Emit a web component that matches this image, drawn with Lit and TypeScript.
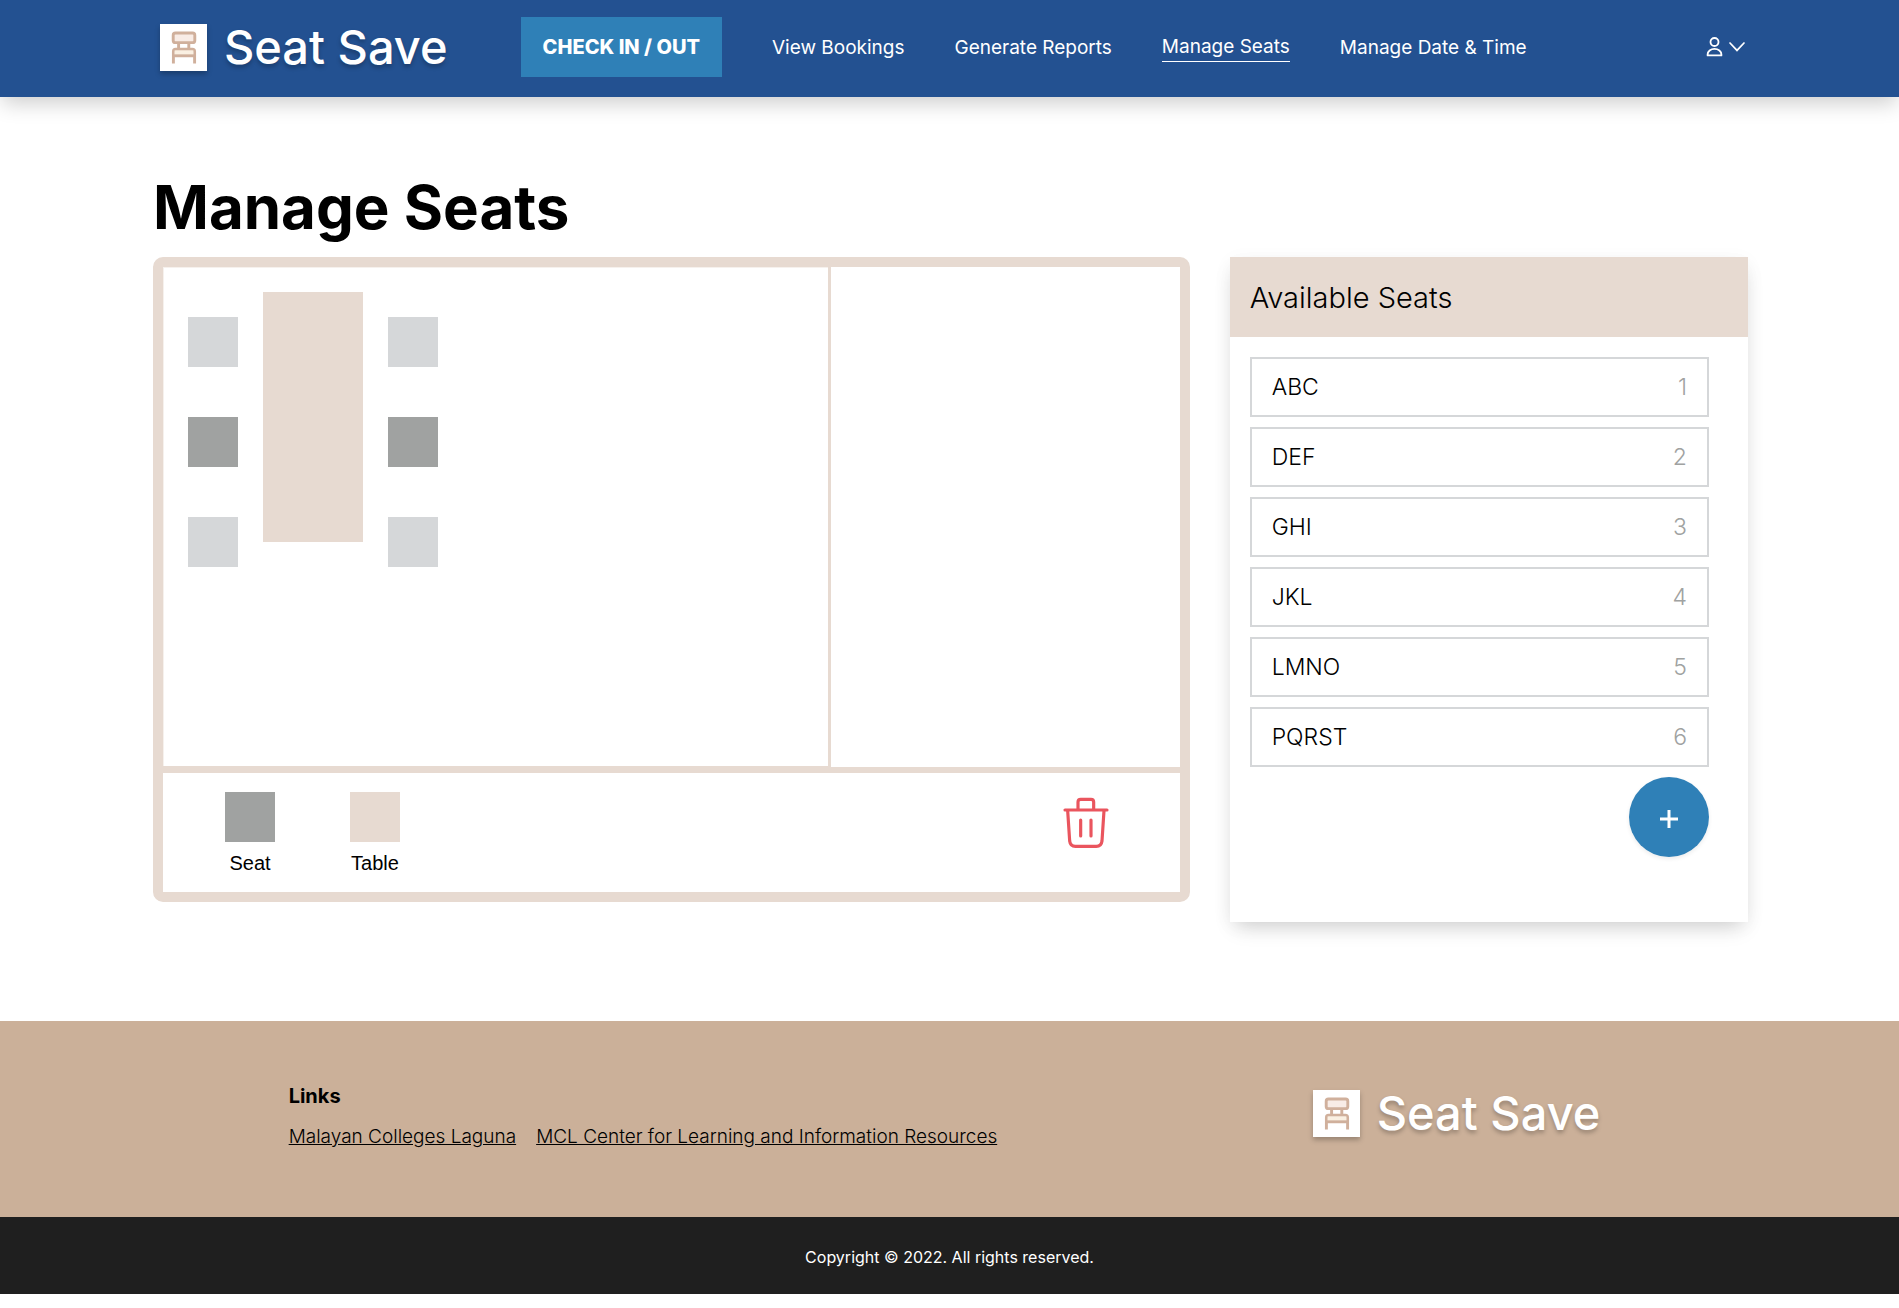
import { LitElement, html, css, svg } from "lit";
import { customElement, property, state } from "lit/decorators.js";
import { classMap } from "lit/directives/class-map.js";

const CELL = 25;

type Kind = "open" | "taken" | "table";

interface Piece {
  kind: Kind;
  col: number;
  row: number;
  cols: number;
  rows: number;
}

const PIECES: Piece[] = [
  { kind: "open", col: 1, row: 2, cols: 2, rows: 2 },
  { kind: "taken", col: 1, row: 6, cols: 2, rows: 2 },
  { kind: "open", col: 1, row: 10, cols: 2, rows: 2 },
  { kind: "table", col: 4, row: 1, cols: 4, rows: 10 },
  { kind: "open", col: 9, row: 2, cols: 2, rows: 2 },
  { kind: "taken", col: 9, row: 6, cols: 2, rows: 2 },
  { kind: "open", col: 9, row: 10, cols: 2, rows: 2 },
];

const SEATS = ["ABC", "DEF", "GHI", "JKL", "LMNO", "PQRST"];

const NAV = ["View Bookings", "Generate Reports", "Manage Seats", "Manage Date & Time"];

@customElement("seat-logo")
export class SeatLogo extends LitElement {
  static styles = css`
    :host {
      display: flex;
      align-items: center;
      gap: 17px;
      color: #fff;
      font: 500 47px/60px Inter, "Open Sans", sans-serif;
      white-space: nowrap;
      text-shadow: 0 3px 4px rgba(0, 0, 0, 0.25);
    }
    .mark {
      flex: none;
      width: 47px;
      height: 47px;
      background: #fff;
      box-shadow: 0 3px 5px rgba(0, 0, 0, 0.25);
    }
  `;

  render() {
    return html`
      <svg class="mark" viewBox="0 0 47 47" aria-hidden="true">
        ${svg`<g stroke="#d0b09c" stroke-width="2.9" stroke-linejoin="round">
          <path d="M18.6 19v6M28.8 19v6" fill="none"></path>
          <rect x="13.2" y="9" width="21.6" height="9.6" rx="2.2" fill="#f8ece6"></rect>
          <path d="M13.4 39.4V27.4q0-2.2 2.2-2.2h16.8q2.2 0 2.2 2.2v12" fill="none"></path>
          <rect x="14.6" y="26.4" width="18.8" height="4.6" fill="#faf0e2" stroke="none"></rect>
          <path d="M13.4 31.8h21.2" fill="none"></path>
        </g>`}
      </svg>
      <span>Seat Save</span>
    `;
  }
}

@customElement("site-header")
export class SiteHeader extends LitElement {
  @property() current = "Manage Seats";

  static styles = css`
    :host {
      display: flex;
      align-items: center;
      box-sizing: border-box;
      min-height: 97px;
      padding: 0 8% 3px;
      background: #235191;
      box-shadow: 0 8px 20px -2px rgba(0, 0, 0, 0.2);
      position: relative;
      font: 400 19px/28px Inter, "Open Sans", sans-serif;
    }
    .home {
      margin: 0 73px 0 8px;
      text-decoration: none;
    }
    .nav {
      display: flex;
      align-items: center;
      gap: 50px;
    }
    .check {
      height: 60px;
      padding: 0 22px;
      border: 0;
      background: #2f80b7;
      color: #fff;
      font: 800 20px/28px Inter, "Open Sans", sans-serif;
      white-space: nowrap;
    }
    .link {
      padding-top: 1px;
      color: #fff;
      text-decoration: none;
      white-space: nowrap;
    }
    .current {
      padding-top: 0;
      border-bottom: 1px solid #fff;
    }
    .user {
      display: flex;
      align-items: center;
      gap: 6px;
      margin-left: auto;
      padding: 0 2px;
      border: 0;
      background: none;
    }
  `;

  render() {
    return html`
      <a class="home" href="#"><seat-logo></seat-logo></a>
      <nav class="nav">
        <button class="check" type="button">CHECK IN / OUT</button>
        ${NAV.map(
          (label) => html`<a
            href="#"
            class=${classMap({ link: true, current: label === this.current })}
            >${label}</a
          >`
        )}
      </nav>
      <button class="user" type="button" aria-label="Account">
        <svg width="17" height="20" viewBox="0 0 17 20" fill="none" stroke="#fff" stroke-width="1.8">
          <circle cx="8.5" cy="5" r="4"></circle>
          <path d="M1.6 18.4v-1a6.9 5.6 0 0 1 13.8 0v1z" stroke-linejoin="round"></path>
        </svg>
        <svg width="16" height="10" viewBox="0 0 16 10" fill="none" stroke="#fff" stroke-width="1.7">
          <path d="M1 1l7 7.4L15 1" stroke-linecap="round"></path>
        </svg>
      </button>
    `;
  }
}

@customElement("seat-planner")
export class SeatPlanner extends LitElement {
  @state() private pieces = PIECES;

  static styles = css`
    :host {
      display: block;
      border: 10px solid #e7dad1;
      border-radius: 10px;
      background: #fff;
    }
    .floor {
      height: 500px;
      border-bottom: 6px solid #e7dad1;
    }
    .room {
      position: relative;
      box-sizing: border-box;
      width: 668px;
      max-width: 100%;
      height: 500px;
      border: 0 solid #e7dad1;
      border-width: 0 3px 1px 0;
      box-shadow: inset 1px 1px #f6f1ed;
    }
    .piece {
      position: absolute;
    }
    .open {
      background: #d5d7d9;
    }
    .taken {
      background: #a0a2a1;
    }
    .table {
      background: #e7dad1;
    }
    .tools {
      display: flex;
      align-items: flex-start;
      gap: 75px;
      padding: 19px 71px 16px 62px;
    }
    .tool {
      display: flex;
      flex-direction: column;
      align-items: center;
      gap: 8px;
      width: 50px;
      font: 400 20px/26px "Liberation Sans", Arial, sans-serif;
      color: #000;
    }
    .swatch {
      width: 50px;
      height: 50px;
    }
    .trash {
      display: flex;
      margin-left: auto;
      padding: 5px 0 0;
      border: 0;
      background: none;
    }
  `;

  render() {
    return html`
      <div class="floor">
        <div class="room">
          ${this.pieces.map(
            (p) => html`<div
              class="piece ${p.kind}"
              style="left:${p.col * CELL}px;top:${p.row * CELL}px;width:${p.cols *
              CELL}px;height:${p.rows * CELL}px"
            ></div>`
          )}
        </div>
      </div>
      <div class="tools">
        <div class="tool"><div class="swatch taken"></div>Seat</div>
        <div class="tool"><div class="swatch table"></div>Table</div>
        <button class="trash" type="button" aria-label="Delete">
          <svg
            width="46"
            height="52"
            viewBox="848 172 138 156"
            fill="none"
            stroke="#ea555e"
            stroke-width="9.5"
            stroke-linecap="round"
            stroke-linejoin="round"
          >
            <path d="M893 208v-21q0-8 8-8h31q8 0 8 8v21"></path>
            <path d="M854 211h126"></path>
            <path d="M862 213l6 91q2 16 17 16h63q15 0 17-16l6-91"></path>
            <path d="M901 241v48M932 241v48"></path>
          </svg>
        </button>
      </div>
    `;
  }
}

@customElement("seat-list")
export class SeatList extends LitElement {
  @property({ attribute: false }) seats = SEATS;

  static styles = css`
    :host {
      display: block;
      background: #fff;
      box-shadow: 0 10px 20px -6px rgba(0, 0, 0, 0.18), 0 4px 20px rgba(0, 0, 0, 0.04);
      font-family: Inter, "Open Sans", sans-serif;
      color: #000;
    }
    .title {
      margin: 0;
      padding: 21px 20px 19px;
      background: #e7dad1;
      font-size: 29px;
      line-height: 40px;
      font-weight: 300;
    }
    .body {
      display: flex;
      flex-direction: column;
      gap: 10px;
      padding: 20px 39px 65px 20px;
    }
    .list {
      display: flex;
      flex-direction: column;
      gap: 10px;
      margin: 0;
      padding: 0;
      list-style: none;
    }
    .seat {
      display: flex;
      justify-content: space-between;
      padding: 13px 20px;
      border: 2px solid #d5d7d9;
      font-size: 23px;
      line-height: 30px;
      font-weight: 300;
    }
    .number {
      color: #a0a2a1;
    }
    .add {
      display: grid;
      place-items: center;
      align-self: flex-end;
      width: 80px;
      height: 80px;
      padding: 4px 0 0;
      border: 0;
      border-radius: 50%;
      background: #2f80b7;
      box-shadow: 0 2px 4px rgba(0, 0, 0, 0.08);
    }
  `;

  render() {
    return html`
      <h2 class="title">Available Seats</h2>
      <div class="body">
        <ol class="list">
          ${this.seats.map(
            (name, i) => html`<li class="seat">
              <span>${name}</span><span class="number">${i + 1}</span>
            </li>`
          )}
        </ol>
        <button class="add" type="button" aria-label="Add seat">
          <svg width="18" height="18" viewBox="0 0 18 18" stroke="#fff" stroke-width="3">
            <path d="M9 0v18M0 9h18"></path>
          </svg>
        </button>
      </div>
    `;
  }
}

@customElement("site-footer")
export class SiteFooter extends LitElement {
  static styles = css`
    :host {
      display: block;
      font-family: Inter, "Open Sans", sans-serif;
    }
    .main {
      display: flex;
      justify-content: space-between;
      padding: 60px 15.2% 65px;
      background: #cbb099;
    }
    .heading {
      margin: 0 0 11px;
      font-size: 20px;
      line-height: 30px;
      font-weight: 700;
    }
    .links {
      display: flex;
      gap: 20px;
      font-size: 19px;
      line-height: 30px;
      font-weight: 300;
    }
    .links a {
      color: #000;
    }
    .brand {
      padding: 2px 10px 0 0;
    }
    .legal {
      margin: 0;
      padding: 27px 0 24px;
      background: #1f1f1f;
      color: #fff;
      font-size: 16px;
      line-height: 26px;
      text-align: center;
    }
  `;

  render() {
    return html`
      <div class="main">
        <div>
          <h3 class="heading">Links</h3>
          <div class="links">
            <a href="#">Malayan Colleges Laguna</a>
            <a href="#">MCL Center for Learning and Information Resources</a>
          </div>
        </div>
        <div class="brand"><seat-logo></seat-logo></div>
      </div>
      <p class="legal">Copyright © 2022. All rights reserved.</p>
    `;
  }
}

@customElement("app-root")
export class AppRoot extends LitElement {
  static styles = css`
    :host {
      display: block;
      background: #fff;
    }
    .main {
      padding: 70px 151px 99px 153px;
    }
    .title {
      margin: 0 0 10px;
      font: 700 60px/80px Inter, "Open Sans", sans-serif;
      color: #000;
    }
    .columns {
      display: grid;
      grid-template-columns: 2fr 1fr;
      align-items: start;
      gap: 40px;
    }
  `;

  render() {
    return html`
      <site-header></site-header>
      <main class="main">
        <h1 class="title">Manage Seats</h1>
        <div class="columns">
          <seat-planner></seat-planner>
          <seat-list></seat-list>
        </div>
      </main>
      <site-footer></site-footer>
    `;
  }
}
